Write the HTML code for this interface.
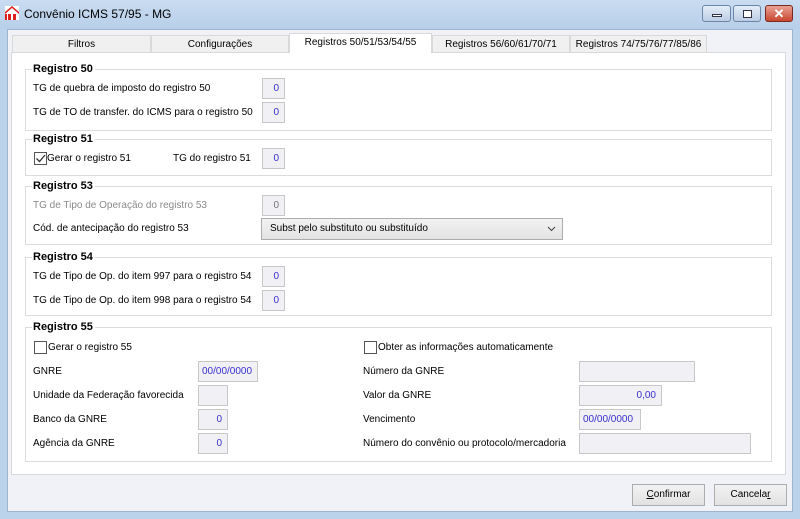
<!DOCTYPE html>
<html><head><meta charset="utf-8"><style>
*{margin:0;padding:0;box-sizing:border-box}
body{width:800px;height:519px;overflow:hidden;font-family:"Liberation Sans",Tahoma,sans-serif;font-size:10px;color:#000;background:#bcd3ec;position:relative;white-space:nowrap}
.a{position:absolute}
#title{left:0;top:0;width:800px;height:29px;background:linear-gradient(#c9dcf1,#b8cfe9)}
#client{left:7px;top:29px;width:786px;height:483px;background:#f1f2f7;border:1px solid #9fb4cf}
.tab{position:absolute;top:35px;height:18px;background:#f0f0f0;border:1px solid #d9d9d9;border-bottom:none;text-align:center;line-height:17px}
#panel{left:11px;top:52px;width:775px;height:423px;background:#fff;border:1px solid #d9d9d9}
.g{position:absolute;left:25px;width:747px;border:1px solid #dcdcdc}
.gt{position:absolute;left:32px;font-weight:bold;background:#fff;padding:0 2px 0 1px;font-size:11px}
.in{position:absolute;height:21px;background:#f0f0f5;border:1px solid #c8c8c8;color:#3a2fd0;text-align:right;padding-right:5px;line-height:20px}
.lb{position:absolute;line-height:14px}
.cb{position:absolute;width:13px;height:13px;border:1px solid #555;background:#fff}
.btn{position:absolute;top:484px;height:22px;border:1px solid #adadad;background:linear-gradient(#f2f2f2,#e2e2e2);text-align:center;line-height:20px}
</style></head><body>
<div id="title" class="a"></div>
<svg class="a" style="left:4px;top:5px" width="16" height="16" viewBox="0 0 16 16"><rect x="1" y="1" width="14" height="14" fill="#fff"/><path d="M1 7 L8 1 L15 7 L15 9 L8 3 L1 9Z" fill="#d22"/><rect x="4" y="9" width="3" height="6" fill="#d22"/><rect x="9" y="9" width="3" height="6" fill="#d22"/><rect x="1" y="9" width="2" height="6" fill="#d22"/></svg>
<div class="a" style="left:24px;top:7px;font-size:12px">Convênio ICMS 57/95 - MG</div>
<div class="a" style="left:702px;top:5px;width:29px;height:17px;border:1px solid #6d85a6;border-radius:3px;background:linear-gradient(#e4edf8,#bccde3)"><div class="a" style="left:9px;top:8px;width:10px;height:3px;background:#fff;border:1px solid #334"></div></div>
<div class="a" style="left:733px;top:5px;width:28px;height:17px;border:1px solid #6d85a6;border-radius:3px;background:linear-gradient(#e4edf8,#bccde3)"><div class="a" style="left:9px;top:4px;width:9px;height:8px;border:1px solid #334;background:#fff"></div></div>
<div class="a" style="left:765px;top:5px;width:28px;height:17px;border:1px solid #7a2a20;border-radius:3px;background:linear-gradient(#e9a294,#c8462f);color:#fff;font-weight:bold;text-align:center;line-height:15px;font-size:13px">✕</div>
<div id="client" class="a"></div>
<div class="tab" style="left:12px;width:139px">Filtros</div>
<div class="tab" style="left:151px;width:138px">Configurações</div>
<div class="tab" style="left:432px;width:138px">Registros 56/60/61/70/71</div>
<div class="tab" style="left:570px;width:137px">Registros 74/75/76/77/85/86</div>
<div id="panel" class="a"></div>
<div class="tab" style="left:289px;top:33px;height:20px;width:143px;background:#fff;z-index:2">Registros 50/51/53/54/55</div>

<div class="g" style="top:69px;height:62px"></div><div class="gt" style="top:63px">Registro 50</div>
<div class="lb" style="left:33px;top:82px">TG de quebra de imposto do registro 50</div><div class="in" style="left:262px;top:78px;width:23px">0</div>
<div class="lb" style="left:33px;top:106px">TG de TO de transfer. do ICMS para o registro 50</div><div class="in" style="left:262px;top:102px;width:23px">0</div>

<div class="g" style="top:139px;height:37px"></div><div class="gt" style="top:133px">Registro 51</div>
<div class="cb" style="left:34px;top:152px"><svg width="11" height="11" style="position:absolute;left:0;top:0"><path d="M1.5 5.5 L4.5 8.5 L10 2" stroke="#333" stroke-width="1.3" fill="none"/></svg></div>
<div class="lb" style="left:47px;top:152px">Gerar o registro 51</div>
<div class="lb" style="left:173px;top:152px">TG do registro 51</div><div class="in" style="left:262px;top:148px;width:23px">0</div>

<div class="g" style="top:186px;height:59px"></div><div class="gt" style="top:180px">Registro 53</div>
<div class="lb" style="left:33px;top:199px;color:#8a8a8a">TG de Tipo de Operação do registro 53</div><div class="in" style="left:262px;top:195px;width:23px;color:#777">0</div>
<div class="lb" style="left:33px;top:222px">Cód. de antecipação do registro 53</div>
<div class="a" style="left:261px;top:218px;width:302px;height:22px;border:1px solid #adadad;background:linear-gradient(#f2f2f2,#e3e3e3);padding-left:8px;line-height:20px">Subst pelo substituto ou substituído<svg class="a" style="right:6px;top:7px" width="9" height="6"><path d="M1 1 L4.5 4.5 L8 1" stroke="#444" fill="none"/></svg></div>

<div class="g" style="top:257px;height:59px"></div><div class="gt" style="top:251px">Registro 54</div>
<div class="lb" style="left:33px;top:270px">TG de Tipo de Op. do item 997 para o registro 54</div><div class="in" style="left:262px;top:266px;width:23px">0</div>
<div class="lb" style="left:33px;top:294px">TG de Tipo de Op. do item 998 para o registro 54</div><div class="in" style="left:262px;top:290px;width:23px">0</div>

<div class="g" style="top:327px;height:135px"></div><div class="gt" style="top:321px">Registro 55</div>
<div class="cb" style="left:34px;top:341px"></div><div class="lb" style="left:48px;top:341px">Gerar o registro 55</div>
<div class="cb" style="left:364px;top:341px"></div><div class="lb" style="left:378px;top:341px">Obter as informações automaticamente</div>
<div class="lb" style="left:33px;top:365px">GNRE</div><div class="in" style="left:198px;top:361px;width:60px;text-align:left;padding-left:3px">00/00/0000</div>
<div class="lb" style="left:33px;top:389px">Unidade da Federação favorecida</div><div class="in" style="left:198px;top:385px;width:30px"></div>
<div class="lb" style="left:33px;top:413px">Banco da GNRE</div><div class="in" style="left:198px;top:409px;width:30px">0</div>
<div class="lb" style="left:33px;top:437px">Agência da GNRE</div><div class="in" style="left:198px;top:433px;width:30px">0</div>
<div class="lb" style="left:363px;top:365px">Número da GNRE</div><div class="in" style="left:579px;top:361px;width:116px"></div>
<div class="lb" style="left:363px;top:389px">Valor da GNRE</div><div class="in" style="left:579px;top:385px;width:83px">0,00</div>
<div class="lb" style="left:363px;top:413px">Vencimento</div><div class="in" style="left:579px;top:409px;width:62px;text-align:left;padding-left:3px">00/00/0000</div>
<div class="lb" style="left:363px;top:437px">Número do convênio ou protocolo/mercadoria</div><div class="in" style="left:579px;top:433px;width:172px"></div>

<div class="btn" style="left:632px;width:73px"><u>C</u>onfirmar</div>
<div class="btn" style="left:714px;width:73px">Cancela<u>r</u></div>
</body></html>
